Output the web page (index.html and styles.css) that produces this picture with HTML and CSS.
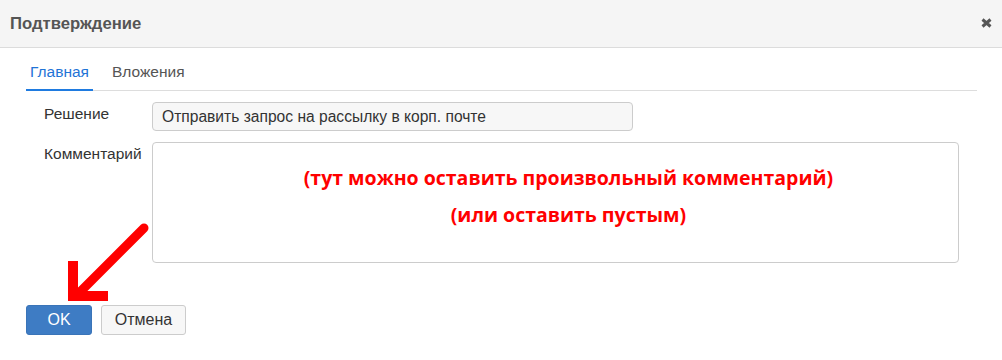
FILE: index.html
```html
<!DOCTYPE html>
<html lang="ru">
<head>
    <meta charset="UTF-8">
    <title>Подтверждение</title>
    <link rel="stylesheet" href="styles.css">
</head>
<body>
    <div class="modal">
        <div class="modal-header">
            <h4 class="modal-title">Подтверждение</h4>
            <svg class="close" width="11" height="10" viewBox="0 0 11 10">
                <path d="M1.5 1.5 L9.5 8.5 M9.5 1.5 L1.5 8.5" stroke="#555" stroke-width="3"/>
            </svg>
        </div>
        <div class="modal-body">
            <ul class="tabs">
                <li class="tab active">Главная</li>
                <li class="tab">Вложения</li>
            </ul>
            <div class="form">
                <div class="form-row">
                    <label class="form-label">Решение</label>
                    <div class="field field-readonly">Отправить запрос на рассылку в корп. почте</div>
                </div>
                <div class="form-row">
                    <label class="form-label">Комментарий</label>
                    <div class="field field-area">
                        <p class="note">(тут можно оставить произвольный комментарий)</p>
                        <p class="note">(или оставить пустым)</p>
                    </div>
                </div>
            </div>
        </div>
        <div class="modal-footer">
            <button class="btn btn-primary">OK</button>
            <button class="btn btn-default">Отмена</button>
        </div>
        <svg class="arrow" width="100" height="100" viewBox="60 215 100 100">
            <line x1="144" y1="228" x2="80" y2="292" stroke="#ff0000" stroke-width="9" stroke-linecap="round"/>
            <polyline points="73,261 73,296 108,296" fill="none" stroke="#ff0000" stroke-width="10" stroke-linejoin="miter"/>
        </svg>
    </div>
</body>
</html>
```

FILE: styles.css
```css
body {
    margin: 0;
    background: #fff;
    font-family: 'Liberation Sans', Arial, sans-serif;
    font-size: 15.5px;
    color: #333;
}
.modal {
    position: relative;
    width: 1002px;
    height: 360px;
}
.modal-header {
    height: 48px;
    background: #f5f5f5;
    border-bottom: 1px solid #dcdcdc;
    display: flex;
    align-items: center;
    justify-content: space-between;
    padding: 0 10px 0 10px;
    box-sizing: border-box;
}
.modal-title {
    margin: 0;
    font-size: 16.7px;
    font-weight: bold;
    color: #555;
}
.close {
    display: block;
    margin-top: -1px;
}
.modal-body {
    padding: 10px 25px 0 26px;
}
.tabs {
    list-style: none;
    margin: 0;
    padding: 0;
    display: flex;
    gap: 15px;
    font-size: 15.5px;
    border-bottom: 1px solid #ddd;
}
.tab {
    padding: 5px 4px 8px;
    color: #555;
    margin-bottom: -1px;
    border-bottom: 2px solid transparent;
}
.tab.active {
    color: #1f74d6;
    border-bottom-color: #1f7be0;
}
.form {
    padding: 11px 18px 0 18px;
    display: flex;
    flex-direction: column;
    gap: 11px;
}
.form-row {
    display: flex;
}
.form-label {
    width: 108px;
    padding-top: 3px;
    color: #333;
}
.field {
    border: 1px solid #ccc;
    border-radius: 4px;
    box-sizing: border-box;
}
.field-readonly {
    width: 481px;
    height: 29px;
    line-height: 27px;
    padding: 0 9px;
    background: #f7f7f7;
    font-size: 15.6px;
}
.field-area {
    width: 808px;
    height: 121px;
    background: #fff;
    padding: 21px 0 0 26px;
    text-align: center;
}
.note {
    margin: 0 0 10px;
    font-family: 'Open Sans', sans-serif;
    font-weight: bold;
    font-size: 19.5px;
    line-height: 27px;
    color: #ff0000;
}
.modal-footer {
    padding: 0 26px;
    margin-top: 42px;
    display: flex;
    gap: 9px;
}
.btn {
    height: 30px;
    border-radius: 3px;
    font-family: 'Liberation Sans', Arial, sans-serif;
    font-size: 16px;
    padding: 0 10px;
    cursor: pointer;
}
.btn-primary {
    width: 66px;
    background: #3e7cc4;
    border: 1px solid #3a74b8;
    color: #fff;
}
.btn-default {
    width: 85px;
    background: #f7f7f7;
    border: 1px solid #ccc;
    color: #333;
}
.arrow {
    position: absolute;
    left: 60px;
    top: 215px;
}
```
